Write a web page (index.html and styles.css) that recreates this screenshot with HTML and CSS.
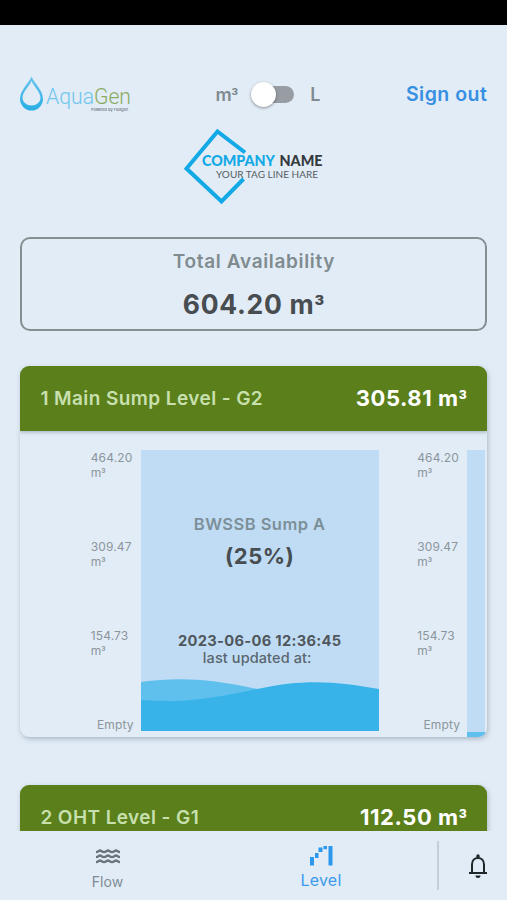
FILE: index.html
```html
<!DOCTYPE html>
<html lang="en">
<head>
  <meta charset="UTF-8" />
  <meta name="viewport" content="width=device-width, initial-scale=1.0" />
  <title>AquaGen - Level</title>
  <link rel="stylesheet" href="styles.css">
</head>
<body>
  <div class="status-bar"></div>

  <main class="content">
    <!-- Top bar -->
    <header class="top-bar">
      <svg class="logo" width="116" height="40" viewBox="0 0 116 40">
        <defs>
          <linearGradient id="drop" x1="0" y1="0" x2="0" y2="1">
            <stop offset="0" stop-color="#6cc4ee" />
            <stop offset="1" stop-color="#2aaee5" />
          </linearGradient>
        </defs>
        <path fill="url(#drop)" fill-rule="evenodd" d="M11.500 2.500C14 9 23 16 23 25A11.500 11.500 0 0 1 0 25C0 16 9 9 11.500 2.500ZM11.500 7C9.500 12 2.500 18 2.500 24A9 7.500 0 0 0 20.500 24C20.500 18 13.500 12 11.500 7Z" />
        <text class="logo-text" x="26" y="30" textLength="85" lengthAdjust="spacingAndGlyphs"><tspan fill="#70c6ee">Aqua</tspan><tspan fill="#8aab62">Gen</tspan></text>
        <text class="logo-powered" x="71" y="36.500" textLength="37">Powered By Fluxgen</text>
      </svg>
      <div class="unit-switch">
        <span>m<span class="cube">³</span></span>
        <div class="switch"><div class="knob"></div></div>
        <span>L</span>
      </div>
      <a class="sign-out">Sign out</a>
    </header>

    <!-- Company logo -->
    <svg class="company" width="142" height="78" viewBox="0 0 142 78">
      <path d="M62 24.500L34.500 3.500L3.500 40.500L38.500 73.500L60.500 51" fill="none" stroke="#12a9e6" stroke-width="4" />
      <text class="company-name" x="19" y="38" textLength="73" lengthAdjust="spacingAndGlyphs" fill="#12a9e6">COMPANY</text>
      <text class="company-name" x="96.500" y="38" textLength="43" lengthAdjust="spacingAndGlyphs" fill="#343a3d">NAME</text>
      <text class="company-tag" x="33" y="49.500" textLength="102" lengthAdjust="spacingAndGlyphs">YOUR TAG LINE HARE</text>
    </svg>

    <section class="total">
      <div class="total-label">Total Availability</div>
      <div class="total-value">604.20 m<span class="cube">³</span></div>
    </section>

    <section class="card">
      <div class="card-header">
        <span class="card-title">1 Main Sump Level - G2</span>
        <span class="card-value">305.81 m<span class="cube">³</span></span>
      </div>
      <div class="slider">
        <div class="slide">
          <div class="scale">
            <span>464.20<br>m<span class="cube">³</span></span>
            <span>309.47<br>m<span class="cube">³</span></span>
            <span>154.73<br>m<span class="cube">³</span></span>
            <span class="empty">Empty</span>
          </div>
          <div class="tank">
            <div class="tank-name">BWSSB Sump A</div>
            <div class="tank-percent">(25%)</div>
            <div class="tank-date">2023-06-06 12:36:45</div>
            <div class="tank-updated">last updated at:</div>
            <svg class="water" width="238" height="53" viewBox="0 0 238 53">
              <path fill="#5fbfed" d="M0 4C38 -1 70 1 116 11V53H0Z" />
              <path fill="#37b3e9" d="M0 22C36 25 65 22 116 11C165 0 200 4 238 11V53H0Z" />
            </svg>
          </div>
        </div>
        <div class="slide">
          <div class="scale">
            <span>464.20<br>m<span class="cube">³</span></span>
            <span>309.47<br>m<span class="cube">³</span></span>
            <span>154.73<br>m<span class="cube">³</span></span>
            <span class="empty">Empty</span>
          </div>
          <div class="tank tank-next"></div>
        </div>
      </div>
    </section>

    <section class="card">
      <div class="card-header">
        <span class="card-title">2 OHT Level - G1</span>
        <span class="card-value">112.50 m<span class="cube">³</span></span>
      </div>
      <div class="slider"></div>
    </section>
  </main>

  <!-- Bottom navigation -->
  <nav class="bottom-nav">
    <a class="nav-item">
      <svg width="26" height="22" viewBox="0 0 26 22" fill="none" stroke="#68747a" stroke-width="2.300">
        <path d="M1 6.100C3.500 6.100 3.500 4.500 5 4.500S7 6.100 9 6.100S11.500 4.500 13 4.500S15 6.100 17 6.100S19.500 4.500 21 4.500S23 6.100 25 6.100" />
        <path d="M1 11.100C3.500 11.100 3.500 9.500 5 9.500S7 11.100 9 11.100S11.500 9.500 13 9.500S15 11.100 17 11.100S19.500 9.500 21 9.500S23 11.100 25 11.100" />
        <path d="M1 16.100C3.500 16.100 3.500 14.500 5 14.500S7 16.100 9 16.100S11.500 14.500 13 14.500S15 16.100 17 16.100S19.500 14.500 21 14.500S23 16.100 25 16.100" />
      </svg>
      <span>Flow</span>
    </a>
    <a class="nav-item active">
      <svg width="24" height="22" viewBox="0 0 24 22" fill="#2b98ec">
        <rect x="1" y="12" width="4" height="8.500" />
        <rect x="6" y="8" width="3.500" height="5" />
        <rect x="9.500" y="2.500" width="4" height="4.500" />
        <rect x="14.500" y="1" width="3.500" height="3.200" />
        <rect x="19.500" y="1" width="4" height="19.500" />
      </svg>
      <span>Level</span>
    </a>
    <a class="nav-bell">
      <svg width="20" height="26" viewBox="0 0 20 26">
        <path d="M4 19V11.500C4 7.500 6.500 5 10 5S16 7.500 16 11.500V19M1 20H19" fill="none" stroke="#20272b" stroke-width="2" />
        <path d="M8.300 4.500V3A1.700 1.700 0 0 1 11.700 3V4.500ZM7.500 22.500H12.500A2.500 2.500 0 0 1 7.500 22.500Z" fill="#20272b" />
      </svg>
    </a>
  </nav>
</body>
</html>
```
FILE: styles.css
```css
* {
  box-sizing: border-box;
}
body {
  margin: 0;
  height: 900px;
  display: flex;
  flex-direction: column;
  overflow: hidden;
  background-color: #e2ecf6;
  font-family: Inter, "Liberation Sans", sans-serif;
  color: #7f8b8f;
}
.status-bar {
  flex: none;
  height: 25px;
  background: #000;
}
.content {
  height: 806px;
  padding: 49px 19.6px 0 20.4px;
  overflow: hidden;
}
/* Narrow superscript for cubic metres */
.cube {
  font-family: Roboto, sans-serif;
  line-height: 1;
}
/* Top bar */
.top-bar {
  display: grid;
  grid-template-columns: 195px 1fr auto;
  align-items: center;
  height: 40px;
}
.logo {
  display: block;
}
.logo-text {
  font-family: Roboto, sans-serif;
  font-weight: 300;
  font-size: 22px;
}
.logo-powered {
  font-size: 4px;
  fill: #56616b;
}
.unit-switch {
  display: flex;
  align-items: center;
  font-size: 18px;
  font-weight: 600;
}
.switch {
  width: 41px;
  height: 17px;
  margin: 0 16px 0 15px;
  border-radius: 9px;
  background: linear-gradient(90deg, transparent 10px, #979da3 10px);
}
.knob {
  width: 25px;
  height: 25px;
  margin-top: -4px;
  margin-left: -2px;
  border-radius: 50%;
  background: #fff;
  box-shadow: 0 1px 3px rgba(0, 0, 0, 0.4);
}
.sign-out {
  font-size: 19.5px;
  font-weight: 600;
  letter-spacing: 0.5px;
  color: #378fe3;
}
.company {
  display: block;
  margin: 13.5px 0 0 162.500px;
}
.company-name {
  font-family: Lato, sans-serif;
  font-weight: 900;
  font-size: 15px;
}
.company-tag {
  font-family: Lato, sans-serif;
  font-size: 10px;
  fill: #555d62;
}
/* Total availability */
.total {
  height: 94px;
  margin-top: 31.5px;
  border: 2.5px solid #838f90;
  border-radius: 10px;
  text-align: center;
}
.total-label {
  margin-top: 10px;
  font-size: 19px;
  font-weight: 600;
  line-height: 26px;
  letter-spacing: 0.65px;
}
.total-value {
  margin-top: 11.5px;
  font-size: 26.5px;
  font-weight: 700;
  line-height: 34px;
  letter-spacing: 0.7px;
  color: #474d51;
}
/* Sump cards */
.card {
  height: 371px;
  margin-top: 35px;
  border-radius: 9px;
  overflow: hidden;
  box-shadow: 1px 2px 5px rgba(70, 90, 110, 0.35);
}
.card + .card {
  margin-top: 48px;
}
.card-header {
  position: relative;
  display: flex;
  justify-content: space-between;
  align-items: center;
  height: 65px;
  padding: 0 20px;
  background: #5a7f1b;
  box-shadow: 0 1px 4px rgba(60, 80, 90, 0.4);
}
.card-title {
  font-size: 19px;
  font-weight: 600;
  letter-spacing: 0.42px;
  color: #c8e0ae;
}
.card-value {
  padding-bottom: 1px;
  font-size: 22px;
  font-weight: 700;
  letter-spacing: 0.55px;
  color: #fff;
}
.slider {
  display: flex;
  height: 306px;
  margin-right: 2.5px;
  padding: 19px 0 0 70.3px;
  overflow: hidden;
}
.slide {
  display: flex;
  flex: none;
  width: 326.5px;
}
.scale {
  width: 50px;
  flex: none;
  display: flex;
  flex-direction: column;
  font-size: 12px;
  line-height: 15px;
  letter-spacing: 0.15px;
  color: #8b969c;
}
.scale > span {
  flex: none;
  height: 89px;
}
.scale > .empty {
  height: 15px;
  padding-right: 7px;
  text-align: right;
}
.tank {
  position: relative;
  flex: none;
  width: 238px;
  height: 281px;
  background: #c0dcf4;
  text-align: center;
}
.tank-name {
  margin-top: 63px;
  font-size: 16.5px;
  font-weight: 600;
  line-height: 22px;
  letter-spacing: 0.45px;
  color: #7c8f98;
}
.tank-percent {
  margin-top: 7px;
  font-size: 22px;
  font-weight: 700;
  line-height: 28px;
  letter-spacing: 0.5px;
  color: #474d51;
}
.tank-date {
  margin-top: 62px;
  font-size: 14.7px;
  font-weight: 700;
  line-height: 18px;
  letter-spacing: 0.3px;
  color: #4f575c;
}
.tank-updated {
  padding-right: 5px;
  font-size: 14.5px;
  font-weight: 500;
  line-height: 16px;
  letter-spacing: 0.1px;
  color: #5a666e;
}
.water {
  position: absolute;
  left: 0;
  bottom: 0;
}
.tank-next {
  height: 287px;
  border-bottom: 5px solid #5fbfed;
}
/* Bottom navigation */
.bottom-nav {
  flex: none;
  display: grid;
  grid-template-columns: 215px 1fr 70px;
  height: 69px;
  background: #e2ecf6;
}
.nav-item {
  display: flex;
  flex-direction: column;
  align-items: center;
  padding-top: 15px;
  font-size: 14px;
  color: #7f8b94;
}
.nav-item span {
  margin-top: 5px;
  line-height: 17px;
}
.nav-item.active {
  padding: 14px 10px 0 0;
  font-size: 16px;
  letter-spacing: 0.2px;
  color: #3b9aec;
}
.nav-bell {
  display: flex;
  align-items: center;
  justify-content: center;
  height: 49px;
  margin-top: 10px;
  padding-left: 10px;
  border-left: 2px solid #c3ced8;
}
```
